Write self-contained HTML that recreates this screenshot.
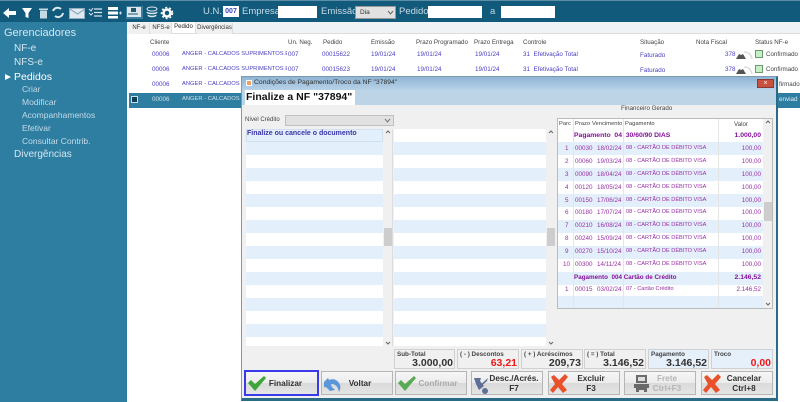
<!DOCTYPE html>
<html><head><meta charset="utf-8"><style>
html,body{margin:0;padding:0;width:800px;height:402px;overflow:hidden;background:#fff}
body{position:relative;font-family:"Liberation Sans",sans-serif}
div,span{position:absolute;white-space:nowrap;box-sizing:border-box}
svg{position:absolute;overflow:visible}
.m{font-size:10px;color:#d5e6ef}.s{font-size:8.5px;color:#c3dbe7}
.u{font-size:9.5px;color:#c8dbe6;top:6px}
.t{font-size:6.3px;color:#4b3fc0;line-height:9px}.h{font-size:6.2px;color:#444;line-height:9px}
.tb{font-size:6px;line-height:11px;height:11px;top:23px;color:#333;text-align:center;background:#f0f0f0;border-right:1px solid #ddd}
.l{left:0;height:13px}.b1{background:#e3effb}
.p{font-size:6.3px;color:#9a2fa5;line-height:13px}.pb{font-weight:bold;color:#86109a;font-size:6.8px}.c{font-size:5.6px}
.bx{top:349px;height:20px;border:1px solid #d0d0d0;background:#f0f0f0}
.lb{left:2px;top:1px;font-size:6.3px;font-weight:bold;color:#444}
.v{right:1px;top:7px;font-size:10.5px;font-weight:bold;color:#333;line-height:13px}
.btn{top:371px;height:24px;background:linear-gradient(#f6f6f6,#ececec 50%,#dadada 50%,#e4e4e4);border:1px solid #b5b5b5;font-size:8.2px;font-weight:bold;color:#333;text-align:center;line-height:10px}
</style></head><body>
<div style="left:0;top:0;width:800px;height:22px;background:#125a7c;border-top:1px solid #5d8ea5"></div>
<div style="left:0;top:22px;width:127px;height:380px;background:#2e7ea1"></div>
<div style="left:127px;top:22px;width:673px;height:12px;background:#f0f3f6"></div>
<div style="left:129px;top:33px;width:671px;height:1px;background:#ddd"></div>

<svg style="left:0;top:0" width="180" height="22">
<path d="M3 13 L9 8 L9 11 L16 11 L16 15 L9 15 L9 18 Z" fill="#fff"/>
<path d="M22 8 L32 8 L28.500 13 L28.500 18 L25.500 17 L25.500 13 Z" fill="#fff"/>
<path d="M40 10.500h7v8h-7z M39 8.500h9v1.500h-9z" fill="#c5d9e4"/>
<path d="M53 11a5 5 0 0 1 8-2M63 13a5 5 0 0 1-8 3" stroke="#dbe8ee" stroke-width="2" fill="none"/>
<rect x="69.500" y="8.500" width="15" height="10" fill="#dfe9ef" stroke="#8fb0c2"/><path d="M70 9l7.500 5 7.500-5" stroke="#7a9db0" fill="none"/>
<path d="M89 9l2 2 2-3M89 13l2 2 2-2" stroke="#dbe8ee" fill="none"/><path d="M94 9h8M94 12.500h8M94 16h8" stroke="#dbe8ee" stroke-width="1.200"/>
<rect x="108" y="7" width="10" height="3" fill="#fff"/><rect x="108" y="11.500" width="10" height="3" fill="#fff"/><rect x="108" y="16" width="10" height="2.500" fill="#fff"/><path d="M119 13h3M120.500 11.500v3" stroke="#cde" />
<rect x="126" y="6" width="17" height="13" fill="#3e7d9b"/><rect x="127" y="7" width="14" height="10" fill="#dde7ee"/><rect x="131" y="8" width="5" height="4" fill="#27566f"/><rect x="128" y="13" width="10" height="2" fill="#7b9fb3"/>
<ellipse cx="152" cy="9" rx="5" ry="2" fill="none" stroke="#dbe8ee"/><path d="M147 12c1 2 9 2 10 0M148 15c1 2 7 2 8 0" stroke="#dbe8ee" stroke-width="1.500" fill="none"/>
<circle cx="167" cy="13" r="3.500" fill="none" stroke="#fff" stroke-width="2.500"/><circle cx="167" cy="13" r="5.500" fill="none" stroke="#fff" stroke-width="1.500" stroke-dasharray="2 2"/>
</svg>
<div class="u" style="left:203px">U.N.</div>
<div style="left:223px;top:6px;width:16px;height:11px;background:#fff;color:#3b46b5;font-size:7px;font-weight:bold;line-height:11px;text-align:center">007</div>
<div class="u" style="left:242px">Empresa</div>
<div style="left:278px;top:6px;width:39px;height:12px;background:#fff"></div>
<div class="u" style="left:321px">Emissão</div>
<div style="left:355px;top:6px;width:41px;height:13px;background:#e1e1e1;border:1px solid #999;font-size:6.5px;line-height:11px;padding-left:4px;color:#333">Dia</div>
<svg style="left:388px;top:11px" width="6" height="4"><path d="M0 0l2.500 3L5 0" stroke="#666" fill="none"/></svg>
<div class="u" style="left:399px">Pedido</div>
<div style="left:428px;top:6px;width:54px;height:12px;background:#fff"></div>
<div class="u" style="left:490px">a</div>
<div style="left:501px;top:6px;width:54px;height:12px;background:#fff"></div>

<div class="m" style="left:4px;top:27px;font-size:11px">Gerenciadores</div>
<div class="m" style="left:14px;top:43px">NF-e</div>
<div class="m" style="left:14px;top:57px">NFS-e</div>
<div style="left:5px;top:74px;width:0;height:0;border-left:6px solid #fff;border-top:3.500px solid transparent;border-bottom:3.500px solid transparent"></div>
<div class="m" style="left:14px;top:71px;color:#fff;font-size:10.500px">Pedidos</div>
<div class="s" style="left:22px;top:84px">Criar</div>
<div class="s" style="left:22px;top:97px">Modificar</div>
<div class="s" style="left:22px;top:110px">Acompanhamentos</div>
<div class="s" style="left:22px;top:123px">Efetivar</div>
<div class="s" style="left:22px;top:136px">Consultar Contrib.</div>
<div class="m" style="left:14px;top:149px">Divergências</div>

<div class="tb" style="left:129px;width:21px">NF-e</div>
<div class="tb" style="left:151px;width:21px">NFS-e</div>
<div class="tb" style="left:172px;width:24px;background:#fff;top:22px;color:#222">Pedido</div>
<div class="tb" style="left:197px;width:36px">Divergências</div>

<div class="h" style="left:150px;top:38px">Cliente</div><div class="h" style="left:288px;top:38px">Un. Neg.</div><div class="h" style="left:323px;top:38px">Pedido</div><div class="h" style="left:371px;top:38px">Emissão</div><div class="h" style="left:416px;top:38px">Prazo Programado</div><div class="h" style="left:474px;top:38px">Prazo Entrega</div><div class="h" style="left:523px;top:38px">Controle</div><div class="h" style="left:640px;top:38px">Situação</div><div class="h" style="left:696px;top:38px">Nota Fiscal</div><div class="h" style="left:755px;top:38px">Status NF-e</div>

<div class="t" style="left:152px;top:50px">00006</div><div class="t" style="left:182px;top:50px;width:105px;overflow:hidden;font-size:5.800px">ANGER - CALCADOS SUPRIMENTOS E E</div><div class="t" style="left:288px;top:50px">007</div><div class="t" style="left:322px;top:50px">00015622</div><div class="t" style="left:371px;top:50px">19/01/24</div><div class="t" style="left:417px;top:50px">19/01/24</div><div class="t" style="left:475px;top:50px">19/01/24</div><div class="t" style="left:523px;top:50px">31&nbsp; Efetivação Total</div><div class="t" style="left:640px;top:51px">Faturado</div><div class="t" style="left:725px;top:50px">378</div>
<div class="h" style="left:766px;top:50px">Confirmado</div>
<div class="t" style="left:152px;top:65px">00006</div><div class="t" style="left:182px;top:65px;width:105px;overflow:hidden;font-size:5.800px">ANGER - CALCADOS SUPRIMENTOS E E</div><div class="t" style="left:288px;top:65px">007</div><div class="t" style="left:322px;top:65px">00015623</div><div class="t" style="left:371px;top:65px">19/01/24</div><div class="t" style="left:417px;top:65px">19/01/24</div><div class="t" style="left:475px;top:65px">19/01/24</div><div class="t" style="left:523px;top:65px">31&nbsp; Efetivação Total</div><div class="t" style="left:640px;top:66px">Faturado</div><div class="t" style="left:725px;top:65px">378</div>
<div class="h" style="left:766px;top:65px">Confirmado</div>
<div class="t" style="left:152px;top:80px">00006</div><div class="t" style="left:182px;top:80px;font-size:5.800px">ANGER - CALCADOS S</div><div class="h" style="left:779px;top:80px">firmado</div>
<svg style="left:735px;top:50px" width="20" height="28"><path d="M1 9l3-5 2 1 2-1 3 5zM1 24l3-5 2 1 2-1 3 5z" fill="#555"/><path d="M9 2c4 0 7 2 8 7M9 17c4 0 7 2 8 7" fill="none" stroke="#ddd" stroke-width="1.500"/></svg>
<div style="left:755px;top:50px;width:8px;height:8px;background:#c6efc6;border:1px solid #6d9a6d"></div>
<div style="left:755px;top:65px;width:8px;height:8px;background:#c6efc6;border:1px solid #6d9a6d"></div>

<div style="left:129px;top:93px;width:671px;height:15px;background:#2e7ea1"></div>
<div style="left:131px;top:96px;width:7px;height:7px;background:#123f58;border:1px solid #cde"></div>
<div class="t" style="left:152px;top:95px;color:#cfe0ea">00006</div><div class="t" style="left:182px;top:95px;color:#cfe0ea;font-size:5.800px">ANGER - CALCADOS S</div><div class="t" style="left:779px;top:95px;color:#e6f0f5">enviad</div>

<!-- window -->
<div style="left:241px;top:76px;width:537px;height:325px;background:#f0f0f0;border:1px solid #7d9bb0;border-right:2px solid #2c6b88;border-bottom:3px solid #2c6b88"></div>
<div style="left:242px;top:77px;width:534px;height:14px;background:linear-gradient(#8fb5d6,#bcd4e8)"></div>
<div style="left:242px;top:91px;width:534px;height:14px;background:#bdd4e6"></div>
<div style="left:246px;top:80px;width:6px;height:6px;background:#f0a060;border:1px solid #fff"></div>
<div style="left:254px;top:79px;font-size:6.800px;color:#333">Condições de Pagamento/Troco da NF "37894"</div>
<div style="left:757px;top:79px;width:17px;height:9px;background:#c9503f;border:1px solid #8a3a30;color:#fff;font-size:7px;line-height:7px;text-align:center">×</div>
<div style="left:245px;top:90px;width:110px;height:15px;background:#fff;font-size:10.500px;font-weight:bold;color:#111;line-height:15px;padding-left:1px">Finalize a NF "37894"</div>
<div class="h" style="left:621px;top:104px">Financeiro Gerado</div>
<div class="h" style="left:245px;top:116px;font-size:6px">Nível Crédito</div>
<div style="left:285px;top:115px;width:109px;height:11px;background:#e1e1e1;border:1px solid #c0c0c0"></div>
<svg style="left:385px;top:119px" width="6" height="4"><path d="M0 0l2.500 3L5 0" stroke="#777" fill="none"/></svg>

<!-- left lists -->
<div style="left:246px;top:129px;width:137px;height:217px;background:#fff;overflow:hidden">
<div class="l b1" style="top:0;width:137px;border:1px solid #cfe0f0"></div><div class="l b1" style="top:13px;width:137px"></div><div class="l b1" style="top:39px;width:137px"></div><div class="l b1" style="top:65px;width:137px"></div><div class="l b1" style="top:91px;width:137px"></div><div class="l b1" style="top:117px;width:137px"></div><div class="l b1" style="top:143px;width:137px"></div><div class="l b1" style="top:169px;width:137px"></div><div class="l b1" style="top:195px;width:137px"></div>
</div>
<div style="left:247px;top:129px;font-size:7px;font-weight:bold;color:#3a33a8;line-height:10px">Finalize ou cancele o documento</div>
<div style="left:383px;top:129px;width:10px;height:217px;background:#f0f0f0;border-right:1px solid #ddd"></div>
<div style="left:384px;top:228px;width:8px;height:18px;background:#cdcdcd"></div>
<div style="left:394px;top:129px;width:152px;height:217px;background:#fff;overflow:hidden">
<div class="l b1" style="top:13px;width:152px"></div><div class="l b1" style="top:39px;width:152px"></div><div class="l b1" style="top:65px;width:152px"></div><div class="l b1" style="top:91px;width:152px"></div><div class="l b1" style="top:117px;width:152px"></div><div class="l b1" style="top:143px;width:152px"></div><div class="l b1" style="top:169px;width:152px"></div><div class="l b1" style="top:195px;width:152px"></div>
</div>
<div style="left:546px;top:129px;width:10px;height:217px;background:#f0f0f0"></div>
<div style="left:547px;top:228px;width:8px;height:18px;background:#cdcdcd"></div>
<svg style="left:0;top:0" width="800" height="402"><path d="M386 133l2-2 2 2M386 342l2 2 2-2M549 133l2-2 2 2M549 342l2 2 2-2M766 123l2-2 2 2M766 303l2 2 2-2" stroke="#666" fill="none"/></svg>

<!-- grid -->
<div style="left:557px;top:118px;width:216px;height:191px;background:#fff;border:1px solid #bbb;overflow:hidden">
<div class="l b1" style="top:23px;width:206px"></div><div class="l b1" style="top:49px;width:206px"></div><div class="l b1" style="top:75px;width:206px"></div><div class="l b1" style="top:101px;width:206px"></div><div class="l b1" style="top:127px;width:206px"></div><div class="l b1" style="top:153px;width:206px"></div><div class="l b1" style="top:177px;height:14px;width:206px"></div>
<div style="left:15px;top:0;width:1px;height:191px;background:#e5e5e5"></div><div style="left:65px;top:0;width:1px;height:191px;background:#e5e5e5"></div><div style="left:160px;top:0;width:1px;height:191px;background:#e5e5e5"></div>
<div style="left:205px;top:0;width:10px;height:191px;background:#f0f0f0"></div>
<div style="left:206px;top:83px;width:8px;height:19px;background:#cdcdcd"></div>
</div>
<svg style="left:0;top:0" width="800" height="402"><path d="M766 123l2-2 2 2M766 303l2 2 2-2" stroke="#666" fill="none"/></svg>
<div class="h" style="left:559px;top:120px;font-size:5.800px">Parc</div><div class="h" style="left:575px;top:120px;font-size:5.800px">Prazo</div><div class="h" style="left:592px;top:120px;font-size:5.800px">Vencimento</div><div class="h" style="left:625px;top:120px;font-size:5.800px">Pagamento</div><div class="h" style="left:734px;top:120px">Valor</div>
<div class="p pb" style="left:574px;top:129px">Pagamento&nbsp; 04&nbsp; 30/60/90 DIAS</div><div class="p pb" style="right:39px;top:129px">1.000,00</div>
<div class="p" style="left:565px;top:142px">1</div><div class="p" style="left:575px;top:142px">00030</div><div class="p" style="left:597px;top:142px">18/02/24</div><div class="p c" style="left:626px;top:142px">08 - CARTÃO DE DÉBITO VISA</div><div class="p" style="right:39px;top:142px">100,00</div>
<div class="p" style="left:565px;top:155px">2</div><div class="p" style="left:575px;top:155px">00060</div><div class="p" style="left:597px;top:155px">19/03/24</div><div class="p c" style="left:626px;top:155px">08 - CARTÃO DE DÉBITO VISA</div><div class="p" style="right:39px;top:155px">100,00</div>
<div class="p" style="left:565px;top:168px">3</div><div class="p" style="left:575px;top:168px">00090</div><div class="p" style="left:597px;top:168px">18/04/24</div><div class="p c" style="left:626px;top:168px">08 - CARTÃO DE DÉBITO VISA</div><div class="p" style="right:39px;top:168px">100,00</div>
<div class="p" style="left:565px;top:181px">4</div><div class="p" style="left:575px;top:181px">00120</div><div class="p" style="left:597px;top:181px">18/05/24</div><div class="p c" style="left:626px;top:181px">08 - CARTÃO DE DÉBITO VISA</div><div class="p" style="right:39px;top:181px">100,00</div>
<div class="p" style="left:565px;top:194px">5</div><div class="p" style="left:575px;top:194px">00150</div><div class="p" style="left:597px;top:194px">17/06/24</div><div class="p c" style="left:626px;top:194px">08 - CARTÃO DE DÉBITO VISA</div><div class="p" style="right:39px;top:194px">100,00</div>
<div class="p" style="left:565px;top:206px">6</div><div class="p" style="left:575px;top:206px">00180</div><div class="p" style="left:597px;top:206px">17/07/24</div><div class="p c" style="left:626px;top:206px">08 - CARTÃO DE DÉBITO VISA</div><div class="p" style="right:39px;top:206px">100,00</div>
<div class="p" style="left:565px;top:219px">7</div><div class="p" style="left:575px;top:219px">00210</div><div class="p" style="left:597px;top:219px">16/08/24</div><div class="p c" style="left:626px;top:219px">08 - CARTÃO DE DÉBITO VISA</div><div class="p" style="right:39px;top:219px">100,00</div>
<div class="p" style="left:565px;top:232px">8</div><div class="p" style="left:575px;top:232px">00240</div><div class="p" style="left:597px;top:232px">15/09/24</div><div class="p c" style="left:626px;top:232px">08 - CARTÃO DE DÉBITO VISA</div><div class="p" style="right:39px;top:232px">100,00</div>
<div class="p" style="left:565px;top:245px">9</div><div class="p" style="left:575px;top:245px">00270</div><div class="p" style="left:597px;top:245px">15/10/24</div><div class="p c" style="left:626px;top:245px">08 - CARTÃO DE DÉBITO VISA</div><div class="p" style="right:39px;top:245px">100,00</div>
<div class="p" style="left:563px;top:258px">10</div><div class="p" style="left:575px;top:258px">00300</div><div class="p" style="left:597px;top:258px">14/11/24</div><div class="p c" style="left:626px;top:258px">08 - CARTÃO DE DÉBITO VISA</div><div class="p" style="right:39px;top:258px">100,00</div>
<div class="p pb" style="left:574px;top:271px;font-size:6.300px">Pagamento&nbsp; 004 Cartão de Crédito</div><div class="p pb" style="right:39px;top:271px">2.146,52</div>
<div class="p" style="left:565px;top:283px">1</div><div class="p" style="left:575px;top:283px">00015</div><div class="p" style="left:597px;top:283px">03/02/24</div><div class="p c" style="left:626px;top:283px">07 - Cartão Crédito</div><div class="p" style="right:39px;top:283px">2.146,52</div>

<!-- totals -->
<div class="bx" style="left:394px;width:61px"><span class="lb">Sub-Total</span><span class="v">3.000,00</span></div>
<div class="bx" style="left:457px;width:62px"><span class="lb">( - ) Descontos</span><span class="v" style="color:#f01818">63,21</span></div>
<div class="bx" style="left:521px;width:62px"><span class="lb">( + ) Acréscimos</span><span class="v">209,73</span></div>
<div class="bx" style="left:584px;width:62px"><span class="lb">( = ) Total</span><span class="v">3.146,52</span></div>
<div class="bx" style="left:648px;width:61px;background:#e6f0fb"><span class="lb">Pagamento</span><span class="v">3.146,52</span></div>
<div class="bx" style="left:711px;width:62px;background:#e6f0fb"><span class="lb">Troco</span><span class="v" style="color:#f01818">0,00</span></div>

<!-- buttons -->
<div class="btn" style="left:245px;width:73px;border:1px solid #3a3ae8;outline:1px solid #3a3ae8;line-height:23px;padding-left:8px">Finalizar</div>
<div class="btn" style="left:321px;width:72px;line-height:23px;padding-left:6px">Voltar</div>
<div class="btn" style="left:395px;width:72px;line-height:23px;padding-left:14px;color:#aaa">Confirmar</div>
<div class="btn" style="left:471px;width:72px;padding:2px 0 0 14px">Desc./Acrés.<br>F7</div>
<div class="btn" style="left:548px;width:72px;padding:2px 0 0 14px">Excluir<br>F3</div>
<div class="btn" style="left:624px;width:72px;padding:2px 0 0 14px;color:#b5b5b5">Frete<br>Ctrl+F3</div>
<div class="btn" style="left:701px;width:72px;padding:2px 0 0 14px">Cancelar<br>Ctrl+8</div>
<svg style="left:0;top:0" width="800" height="402">
<path d="M248 383l3-3 4 4 9-8 2 2-11 13z" fill="#3fa53a"/>
<path d="M398 383l3-3 4 4 9-8 2 2-11 13z" fill="#5aaa55"/>
<path d="M324 382l4-4 1 2c5-2 9 0 11 5 1 3 0 5-1 7-1-5-3-8-8-8l1 4-8-1z M325 386l7 1 3 3-5 1z" fill="#5a96d8"/>
<path d="M474 378h7l-1 3 4 5-5 4-3-6zM488 378l-1 3-9 8 1-3zM482 391a2.500 2.500 0 1 1 6 0a2.500 2.500 0 1 1-6 0z" fill="#5f6f95"/>
<path d="M551 377l3-2 5 5 6-6 3 3-6 7 5 6-4 3-5-6-5 6-3-3 5-6z" fill="#e8512a"/>
<path d="M704 377l3-2 5 5 6-6 3 3-6 7 5 6-4 3-5-6-5 6-3-3 5-6z" fill="#e8512a"/>
<path d="M636 375h11v8h-11zM634 384h15v4h-15zM636 388h11v2h-11zM636 390h3v2h-3zM644 390h3v2h-3z" fill="#6a6a6a"/><rect x="638" y="377" width="7" height="4" fill="#ddd"/>
</svg>
</body></html>
